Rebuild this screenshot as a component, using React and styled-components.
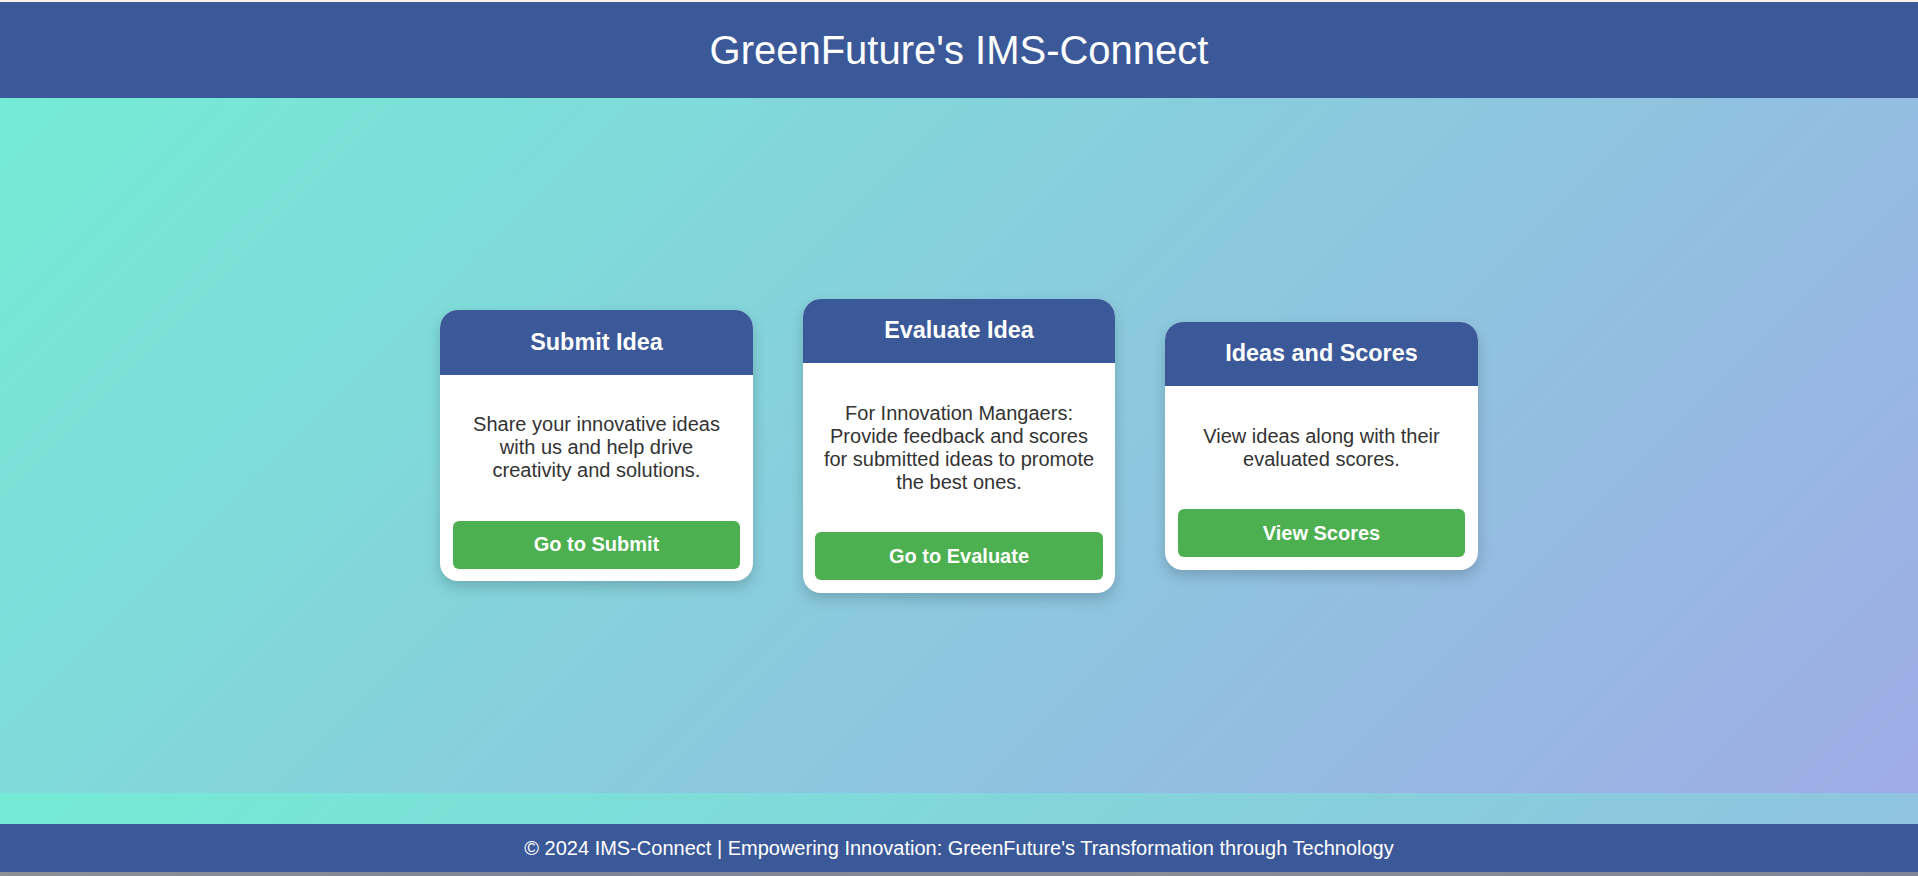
import React from "react";
import styled, { createGlobalStyle } from "styled-components";

const GlobalStyle = createGlobalStyle`
  * { box-sizing: border-box; }
  html, body { margin: 0; padding: 0; }
  body {
    font-family: "Liberation Sans", Arial, sans-serif;
    background: #888d96;
  }
`;

const Page = styled.div`
  display: flex;
  flex-direction: column;
  width: 100%;
  height: 876px;
  overflow: hidden;
`;

const TopStrip = styled.div`
  height: 2px;
  background: #fbf3e4;
`;

const Header = styled.header`
  height: 96px;
  background: #3b5998;
  display: flex;
  align-items: center;
  justify-content: center;
`;

const Title = styled.h1`
  margin: 0;
  font-size: 40px;
  font-weight: normal;
  color: #ffffff;
  line-height: 46px;
`;

const Main = styled.main`
  height: 695px;
  background: linear-gradient(135deg, #74ebd5 0%, #9face6 100%);
  display: flex;
  align-items: center;
  justify-content: center;
  gap: 50px;
`;

const Band = styled.div`
  height: 31px;
  background: linear-gradient(135deg, #74ebd5 0%, #9face6 100%);
  background-size: 1918px 1126px;
  background-position: 0 0;
`;

const Card = styled.section`
  width: 312.5px;
  background: #ffffff;
  border-radius: 18px;
  overflow: hidden;
  box-shadow: 0 6px 14px rgba(0, 0, 0, 0.18);
  display: flex;
  flex-direction: column;
`;

const CardHeader = styled.h3`
  margin: 0;
  padding: 18.75px 10px;
  background: #3b5998;
  color: #ffffff;
  font-size: 23.4px;
  line-height: 27px;
  font-weight: bold;
  text-align: center;
`;

const CardBody = styled.div`
  padding: 0 12.5px 12.5px;
  display: flex;
  flex-direction: column;
`;

const CardText = styled.p`
  margin: 38.5px 0;
  padding: 0 5px;
  font-size: 20px;
  line-height: 23px;
  color: #333333;
  text-align: center;
`;

const ActionButton = styled.button`
  height: 48px;
  width: 100%;
  border: none;
  border-radius: 6px;
  background: #4caf50;
  color: #ffffff;
  font-family: "Liberation Sans", Arial, sans-serif;
  font-size: 20px;
  font-weight: bold;
  cursor: pointer;
`;

const Footer = styled.footer`
  height: 48px;
  background: #3b5998;
  display: flex;
  align-items: center;
  justify-content: center;
`;

const FooterText = styled.p`
  margin: 0;
  color: #ffffff;
  font-size: 20px;
  line-height: 23px;
`;

const BottomStrip = styled.div`
  height: 4px;
  background: linear-gradient(90deg, #8d9096 0%, #7d8596 30%, #8a8c96 60%, #7f8797 100%);
`;

const cards = [
  {
    title: "Submit Idea",
    text: "Share your innovative ideas with us and help drive creativity and solutions.",
    action: "Go to Submit",
  },
  {
    title: "Evaluate Idea",
    text: "For Innovation Mangaers: Provide feedback and scores for submitted ideas to promote the best ones.",
    action: "Go to Evaluate",
  },
  {
    title: "Ideas and Scores",
    text: "View ideas along with their evaluated scores.",
    action: "View Scores",
  },
];

export default function App() {
  return (
    <>
      <GlobalStyle />
      <Page>
        <TopStrip />
        <Header>
          <Title>GreenFuture's IMS-Connect</Title>
        </Header>
        <Main>
          {cards.map((c) => (
            <Card key={c.title}>
              <CardHeader>{c.title}</CardHeader>
              <CardBody>
                <CardText>{c.text}</CardText>
                <ActionButton>{c.action}</ActionButton>
              </CardBody>
            </Card>
          ))}
        </Main>
        <Band />
        <Footer>
          <FooterText>
            © 2024 IMS-Connect | Empowering Innovation: GreenFuture's Transformation through Technology
          </FooterText>
        </Footer>
        <BottomStrip />
      </Page>
    </>
  );
}
